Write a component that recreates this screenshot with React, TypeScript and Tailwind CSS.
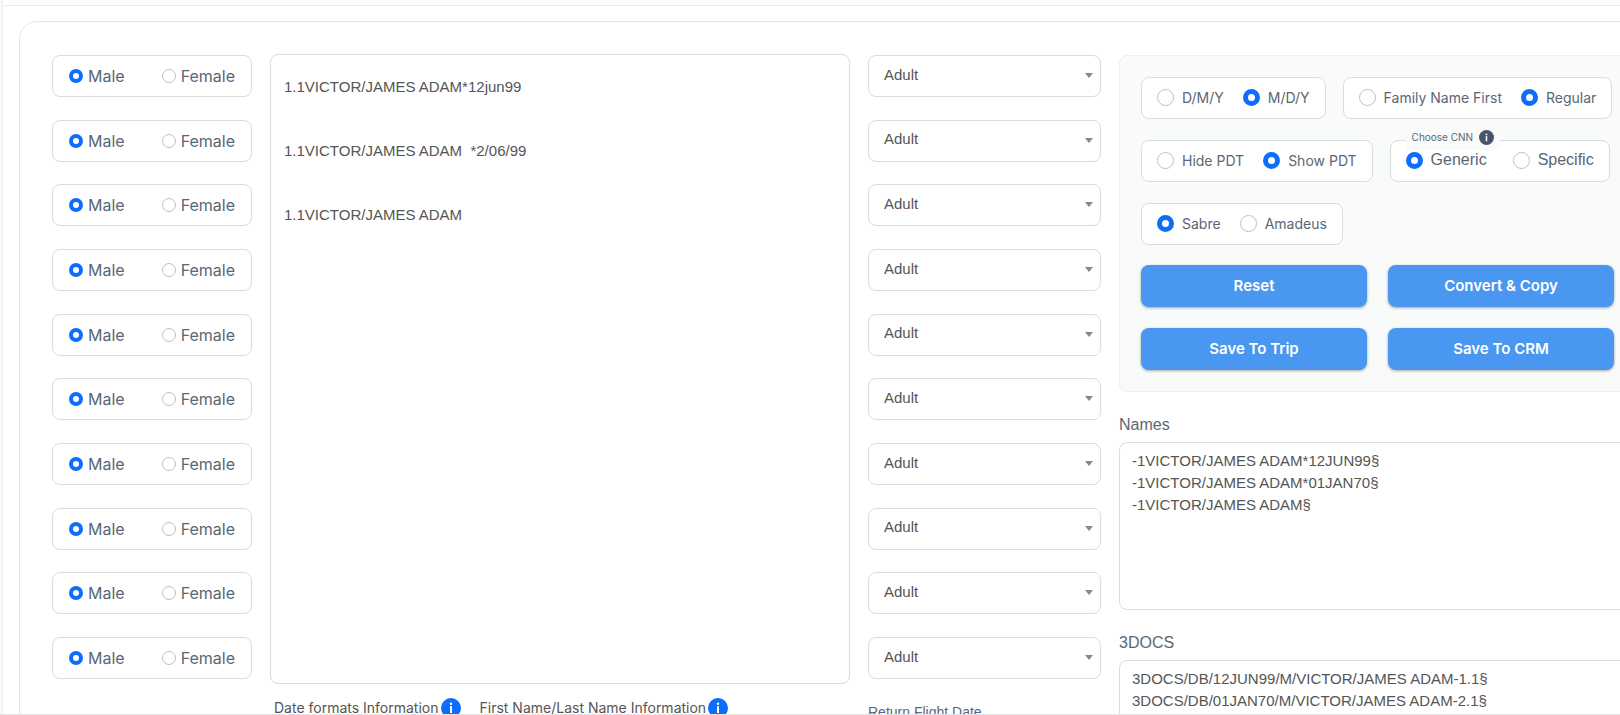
import { useState } from 'react';

const PASSENGER_COUNT = 10;

const INPUT_TEXT = [
  '1.1VICTOR/JAMES ADAM*12jun99',
  '1.1VICTOR/JAMES ADAM  *2/06/99',
  '1.1VICTOR/JAMES ADAM',
].join('\n');

const NAMES_TEXT = [
  '-1VICTOR/JAMES ADAM*12JUN99§',
  '-1VICTOR/JAMES ADAM*01JAN70§',
  '-1VICTOR/JAMES ADAM§',
].join('\n');

const DOCS_TEXT = [
  '3DOCS/DB/12JUN99/M/VICTOR/JAMES ADAM-1.1§',
  '3DOCS/DB/01JAN70/M/VICTOR/JAMES ADAM-2.1§',
].join('\n');

const arial = "font-['Liberation_Sans',Arial,sans-serif]";
const box = 'rounded-lg border border-[#d8dce6] bg-white';

function GenderRow({ index }: { index: number }) {
  const [gender, setGender] = useState('Male');
  return (
    <div className={`flex h-[42px] items-center justify-between px-4 ${box}`}>
      {['Male', 'Female'].map((option) => (
        <label key={option} className="flex items-center gap-[5px] text-[16px] text-[#5b6675]">
          <input
            type="radio"
            name={`gender-${index}`}
            checked={gender === option}
            onChange={() => setGender(option)}
            className="size-[14px] appearance-none rounded-full border border-[#bfbfbf] bg-white checked:border-4 checked:border-[#0d6efd]"
          />
          {option}
        </label>
      ))}
    </div>
  );
}

function AgeSelect({ index }: { index: number }) {
  return (
    <div className="relative h-[42px]">
      <select
        aria-label={`Passenger ${index + 1} type`}
        className={`h-full w-full appearance-none px-[15px] pb-0.5 text-[15px] text-[#555] ${arial} ${box}`}
      >
        <option>Adult</option>
        <option>Child</option>
        <option>Infant</option>
      </select>
      <svg
        className="pointer-events-none absolute right-2 top-[18px] h-[5px] w-2 fill-[#888]"
        viewBox="0 0 8 5"
      >
        <path d="M0 0h8L4 5z" />
      </svg>
    </div>
  );
}

type OptionGroupProps = {
  name: string;
  options: string[];
  initial: string;
  className?: string;
};

function OptionGroup({ name, options, initial, className = 'gap-[19px] text-[14px]' }: OptionGroupProps) {
  const [value, setValue] = useState(initial);
  return (
    <div className={`flex h-[42px] items-center px-[15px] pb-0.5 text-[#5b6675] ${box} ${className}`}>
      {options.map((option) => (
        <label key={option} className="flex items-center gap-2 whitespace-nowrap">
          <input
            type="radio"
            name={name}
            checked={value === option}
            onChange={() => setValue(option)}
            className="size-[17px] appearance-none rounded-full border border-[#bfbfbf] bg-white checked:border-5 checked:border-[#0d6efd]"
          />
          {option}
        </label>
      ))}
    </div>
  );
}

function InfoIcon({ className }: { className: string }) {
  return (
    <svg className={`shrink-0 ${className}`} viewBox="0 0 16 16" fill="currentColor">
      <circle cx="8" cy="8" r="8" />
      <circle cx="8" cy="4.6" r="1" fill="#fff" />
      <rect x="7.2" y="6.5" width="1.6" height="5.5" fill="#fff" />
    </svg>
  );
}

function ActionButton({ children }: { children: string }) {
  return (
    <button
      type="button"
      className="h-[42px] rounded-lg bg-[#4997f0] text-[15px] font-semibold text-white shadow-[0_1px_3px_rgba(0,0,0,0.35)]"
    >
      {children}
    </button>
  );
}

export default function App() {
  const rows = Array.from({ length: PASSENGER_COUNT }, (_, i) => i);

  return (
    <div className="flex h-screen overflow-hidden border-b border-[#e4e4e4] bg-white font-['Inter',sans-serif]">
      <div className="w-[3px] shrink-0 border-r border-[#ececf0] bg-[#fafafa]" />
      <main className="min-w-0 grow">
        <div className="h-[6px] border-b border-[#ebebee]" />
        <div className="-mr-[49px] ml-4 mt-[15px] flex gap-[18px] rounded-[18px] border border-[#e2e4e8] px-8 pb-20 pt-[33px]">
          <div className="flex h-[624px] w-[200px] flex-col justify-between">
            {rows.map((i) => (
              <GenderRow key={i} index={i} />
            ))}
          </div>

          <div className="-mt-px min-w-0 grow">
            <textarea
              aria-label="Passenger names"
              defaultValue={INPUT_TEXT}
              className={`block h-[630px] w-full resize-none px-[13px] text-[15px] leading-[64px] text-[#555] ${arial} ${box}`}
            />
            <div className="mt-[13px] flex gap-[19px] pl-1 text-[14px] text-[#555]">
              <span className="flex items-center gap-0.5">
                Date formats Information
                <InfoIcon className="size-5 text-[#0d6efd]" />
              </span>
              <span className="flex items-center gap-0.5">
                First Name/Last Name Information
                <InfoIcon className="size-5 text-[#0d6efd]" />
              </span>
            </div>
          </div>

          <div className="w-[233px] shrink-0">
            <div className="flex h-[624px] flex-col justify-between">
              {rows.map((i) => (
                <AgeSelect key={i} index={i} />
              ))}
            </div>
            <label
              htmlFor="return-date"
              className={`mt-[23px] block text-[14px] leading-5 text-[#5b6675] ${arial}`}
            >
              Return Flight Date
            </label>
            <input id="return-date" type="text" className={`mt-2 h-[42px] w-full px-4 ${box}`} />
          </div>

          <div className="w-[517px] shrink-0">
            <section className="rounded-lg border border-[#edf0ef] bg-[#f9fbfa] px-[21px] py-[21px]">
              <div className="flex gap-[17px]">
                <OptionGroup name="date-order" options={['D/M/Y', 'M/D/Y']} initial="M/D/Y" />
                <OptionGroup name="name-order" options={['Family Name First', 'Regular']} initial="Regular" />
              </div>
              <div className="mt-[21px] flex gap-[17px]">
                <OptionGroup name="pdt" options={['Hide PDT', 'Show PDT']} initial="Show PDT" />
                <div className="relative">
                  <OptionGroup
                    name="cnn"
                    options={['Generic', 'Specific']}
                    initial="Generic"
                    className="gap-[26px] text-[16px] font-['Liberation_Sans',Arial,sans-serif]"
                  />
                  <div className="absolute -top-3 left-4 flex h-[22px] items-center gap-[6px] bg-[#f9fbfa] px-[6px] pb-1 text-[10px] whitespace-nowrap text-[#5b6675]">
                    Choose CNN
                    <InfoIcon className="size-[15px] text-[#475569]" />
                  </div>
                </div>
              </div>
              <div className="mt-[21px] flex">
                <OptionGroup name="gds" options={['Sabre', 'Amadeus']} initial="Sabre" />
              </div>
              <div className="mt-5 grid grid-cols-2 gap-x-[21px] gap-y-[21px]">
                <ActionButton>Reset</ActionButton>
                <ActionButton>Convert &amp; Copy</ActionButton>
                <ActionButton>Save To Trip</ActionButton>
                <ActionButton>Save To CRM</ActionButton>
              </div>
            </section>

            <label htmlFor="names" className={`mt-[21px] block text-[16px] leading-6 text-[#5b6675] ${arial}`}>
              Names
            </label>
            <textarea
              id="names"
              defaultValue={NAMES_TEXT}
              className={`mt-[5px] block h-[168px] w-full resize-none px-3 py-[7px] text-[15px] leading-[22px] text-[#555] ${arial} ${box}`}
            />
            <label htmlFor="docs" className={`mt-[21px] block text-[16px] leading-6 text-[#5b6675] ${arial}`}>
              3DOCS
            </label>
            <textarea
              id="docs"
              defaultValue={DOCS_TEXT}
              className={`mt-[5px] block h-[168px] w-full resize-none px-3 py-[7px] text-[15px] leading-[22px] text-[#555] ${arial} ${box}`}
            />
          </div>
        </div>
      </main>
    </div>
  );
}
